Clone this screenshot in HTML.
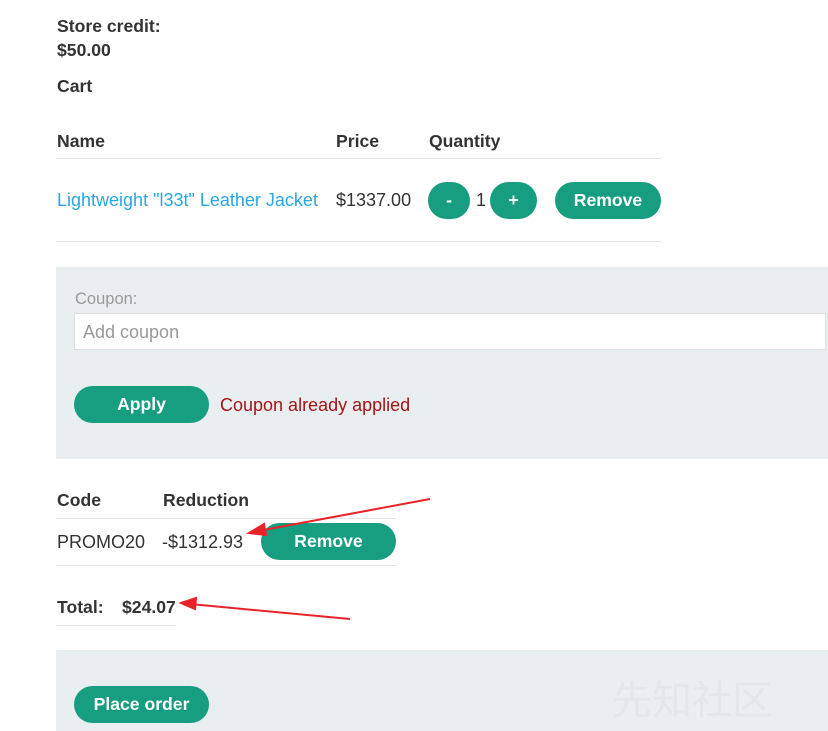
<!DOCTYPE html>
<html><head><style>
body{margin:0;width:828px;height:731px;overflow:hidden;background:#fff;font-family:"Liberation Sans",Arial,sans-serif;color:#333;position:relative}
.a{position:absolute;white-space:nowrap}
.b{font-weight:bold;font-size:17.6px}
.t{font-size:18px}
.btn{position:absolute;background:#179d7f;color:#fff;font-weight:bold;font-size:17.6px;border-radius:19px;text-align:center;height:37px;line-height:37px}
.hr{position:absolute;height:1px;background:#e4e4e4}
.panel{position:absolute;background:#e9eef0}
</style></head><body>
<div class="a b" style="left:57px;top:16px">Store credit:</div>
<div class="a b" style="left:57px;top:40px">$50.00</div>
<div class="a b" style="left:57px;top:76px">Cart</div>
<div class="a b" style="left:57px;top:131px">Name</div>
<div class="a b" style="left:336px;top:131px">Price</div>
<div class="a b" style="left:429px;top:131px">Quantity</div>
<div class="hr" style="left:56px;top:158px;width:605px"></div>
<div class="a t" style="left:57px;top:190px;color:#29a7e1">Lightweight "l33t" Leather Jacket</div>
<div class="a t" style="left:336px;top:190px">$1337.00</div>
<div class="btn" style="left:428px;top:182px;width:42px">-</div>
<div class="a t" style="left:476px;top:190px">1</div>
<div class="btn" style="left:490px;top:182px;width:47px">+</div>
<div class="btn" style="left:555px;top:182px;width:106px">Remove</div>
<div class="hr" style="left:56px;top:241px;width:605px"></div>
<div class="panel" style="left:56px;top:267px;width:772px;height:192px"></div>
<div class="a" style="left:75px;top:290px;font-size:16.5px;color:#999">Coupon:</div>
<div class="a" style="left:74px;top:313px;width:750px;height:35px;background:#fff;border:1px solid #ddd"></div>
<div class="a" style="left:83px;top:322px;font-size:18px;color:#999">Add coupon</div>
<div class="btn" style="left:74px;top:386px;width:135px">Apply</div>
<div class="a t" style="left:220px;top:395px;color:#a31515">Coupon already applied</div>
<div class="a b" style="left:57px;top:490px">Code</div>
<div class="a b" style="left:163px;top:490px">Reduction</div>
<div class="hr" style="left:56px;top:518px;width:340px"></div>
<div class="a t" style="left:57px;top:532px">PROMO20</div>
<div class="a t" style="left:162px;top:532px">-$1312.93</div>
<div class="btn" style="left:261px;top:523px;width:135px">Remove</div>
<div class="hr" style="left:56px;top:565px;width:340px"></div>
<div class="a b" style="left:57px;top:597px">Total:</div>
<div class="a b" style="left:122px;top:597px">$24.07</div>
<div class="hr" style="left:56px;top:625px;width:120px"></div>
<div class="panel" style="left:56px;top:650px;width:772px;height:81px"></div>
<div class="btn" style="left:74px;top:686px;width:135px">Place order</div>
<div class="a" style="left:612px;top:668px;font-size:40px;color:#e3e7e9;font-family:'Noto Sans CJK SC',sans-serif">先知社区</div>
<svg class="a" style="left:0;top:0" width="828" height="731">
<g stroke="#e8232a" stroke-width="2" fill="#e8232a">
<line x1="430" y1="499" x2="258" y2="531"/>
<polygon points="249,533 264,524 266,535"/>
<line x1="350" y1="619" x2="190" y2="604"/>
<polygon points="181,603 196,598 195,609"/>
</g></svg>
</body></html>
